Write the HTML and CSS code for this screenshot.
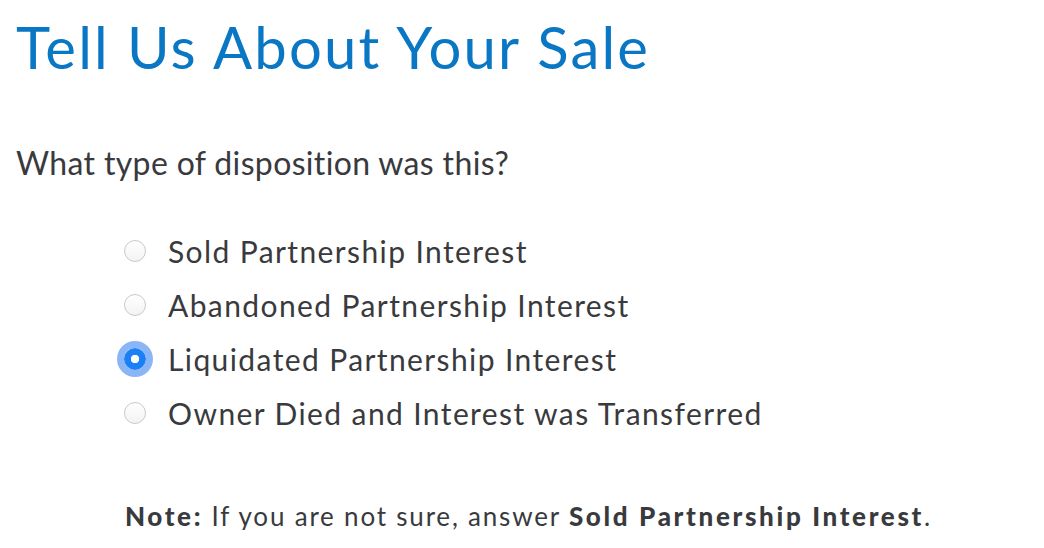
FILE: index.html
```html
<!DOCTYPE html>
<html lang="en">
<head>
<meta charset="utf-8">
<title>Tell Us About Your Sale</title>
<link rel="stylesheet" href="styles.css">
</head>
<body>
<main class="page">
  <h1 class="title">Tell Us About Your Sale</h1>
  <p class="question">What type of disposition was this?</p>
  <div class="options" role="radiogroup">
    <label class="option"><span class="radio"></span><span class="label">Sold Partnership Interest</span></label>
    <label class="option"><span class="radio"></span><span class="label">Abandoned Partnership Interest</span></label>
    <label class="option"><span class="radio checked"></span><span class="label">Liquidated Partnership Interest</span></label>
    <label class="option"><span class="radio"></span><span class="label">Owner Died and Interest was Transferred</span></label>
  </div>
  <p class="note"><strong>Note:</strong> If you are not sure, answer <strong>Sold Partnership Interest</strong>.</p>
</main>
</body>
</html>
```

FILE: styles.css
```css
html, body {
  margin: 0;
  padding: 0;
  background: #ffffff;
}

.page {
  font-family: Lato, "Open Sans", sans-serif;
  color: #393a3d;
  padding: 12px 0 0 16px;
}

.title {
  margin: 0;
  font-weight: 400;
  font-size: 58px;
  line-height: 1.2;
  letter-spacing: 2.2px;
  color: #0a77c4;
}

.question {
  margin: 62px 0 0 0;
  font-size: 32px;
  line-height: 1.2;
  letter-spacing: 0.35px;
}

.options {
  margin: 42px 0 0 0;
  padding-left: 108px;
  display: flex;
  flex-direction: column;
}

.option {
  height: 54px;
  display: flex;
  align-items: center;
  gap: 22px;
  font-size: 30px;
  line-height: 36px;
  letter-spacing: 1.4px;
}

.radio {
  width: 20px;
  height: 20px;
  border-radius: 50%;
  border: 1px solid #c9c9c9;
  background: linear-gradient(#ffffff, #f3f3f3);
  flex: none;
}

.radio.checked {
  border-color: #1a82f7;
  background: radial-gradient(circle, #ffffff 0 4px, #1b80f5 4.5px);
  box-shadow: 0 0 0 7px #8ab6f8;
}

.note {
  margin: 62px 0 0 109px;
  font-size: 26px;
  line-height: 28px;
  letter-spacing: 1.8px;
}

.note strong {
  font-weight: 900;
  letter-spacing: 2.65px;
}
```
